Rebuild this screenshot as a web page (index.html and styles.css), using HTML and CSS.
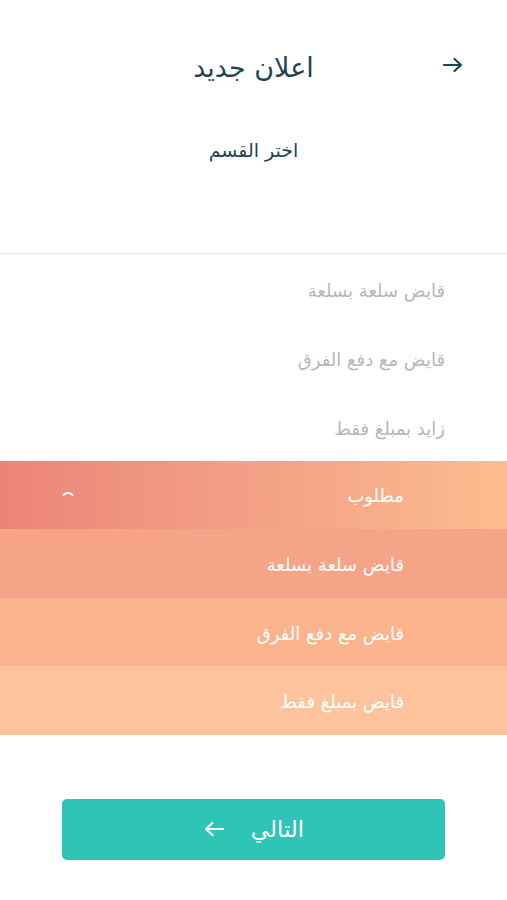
FILE: index.html
```html
<!DOCTYPE html>
<html lang="ar" dir="rtl">
<head>
<meta charset="utf-8">
<link rel="stylesheet" href="styles.css">
</head>
<body>
<div class="page">
  <header class="topbar">
    <span class="back">
      <svg width="22" height="16" viewBox="0 0 22 16"><path d="M2 8H19M12.5 2L19 8L12.5 14" fill="none" stroke="#1f4553" stroke-width="2.2" stroke-linecap="round" stroke-linejoin="round"/></svg>
    </span>
    <h1 class="title">اعلان جديد</h1>
  </header>
  <p class="subtitle">اختر القسم</p>
  <ul class="list">
    <li class="item">قايض سلعة بسلعة</li>
    <li class="item">قايض مع دفع الفرق</li>
    <li class="item">زايد بمبلغ فقط</li>
  </ul>
  <div class="group">
    <div class="group-head">
      <span class="group-title">مطلوب</span>
      <svg class="chev" width="12" height="6" viewBox="0 0 12 6"><path d="M1.5 5Q6 0.5 10.5 5" fill="none" stroke="#fff" stroke-width="2" stroke-linecap="round"/></svg>
    </div>
    <div class="sub sub1">قايض سلعة بسلعة</div>
    <div class="sub sub2">قايض مع دفع الفرق</div>
    <div class="sub sub3">قايض بمبلغ فقط</div>
  </div>
  <div class="actions">
    <button class="next">
      <span>التالي</span>
      <svg width="22" height="16" viewBox="0 0 22 16"><path d="M20 8H3M9.5 2L3 8L9.5 14" fill="none" stroke="#fff" stroke-width="2.2" stroke-linecap="round" stroke-linejoin="round"/></svg>
    </button>
  </div>
</div>
</body>
</html>
```
FILE: styles.css
```css
* { box-sizing: border-box; }
html, body { margin: 0; padding: 0; background: #fff; }
body {
  font-family: "DejaVu Sans", "Noto Sans", sans-serif;
  width: 507px;
}
.page { display: flex; flex-direction: column; }
.topbar {
  position: relative;
  height: 134px;
  display: flex;
  align-items: center;
  justify-content: center;
}
.back {
  position: absolute;
  right: 43px;
  top: 57px;
  display: flex;
}
.title {
  margin: 0;
  font-size: 27px;
  font-weight: normal;
  color: #1f4553;
}
.subtitle {
  margin: 0;
  height: 119px;
  text-align: center;
  font-size: 19px;
  color: #1f4553;
  padding-top: 5px;
}
.list {
  list-style: none;
  margin: 0;
  padding: 0;
  border-top: 1px solid #e8eaeb;
}
.item {
  height: 69px;
  display: flex;
  align-items: center;
  padding-right: 62px;
  padding-top: 3px;
  font-size: 18px;
  color: #b3b7bc;
}
.group { display: flex; flex-direction: column; }
.group-head {
  height: 68px;
  display: flex;
  align-items: center;
  justify-content: space-between;
  padding-right: 103px;
  padding-left: 62px;
  background: linear-gradient(to left, #fcbd8e 0%, #f6a888 35%, #f09682 70%, #ec8478 100%);
}
.group-title { font-size: 18px; color: #fff; }
.chev { margin-bottom: 4px; }
.sub {
  height: 69px;
  display: flex;
  align-items: center;
  padding-right: 103px;
  padding-top: 2px;
  font-size: 18px;
  color: #fff;
}
.sub1 { background: #f5a487; }
.sub2 { background: #fab38c; height: 68px; }
.sub3 { background: #fdc39c; }
.actions {
  padding: 64px 62px 0;
}
.next {
  width: 100%;
  height: 61px;
  border: 0;
  border-radius: 5px;
  background: #2ec4b6;
  color: #fff;
  font-family: inherit;
  font-size: 23px;
  display: flex;
  align-items: center;
  justify-content: center;
  gap: 26px;
  padding: 0 0 2px;
}
```
